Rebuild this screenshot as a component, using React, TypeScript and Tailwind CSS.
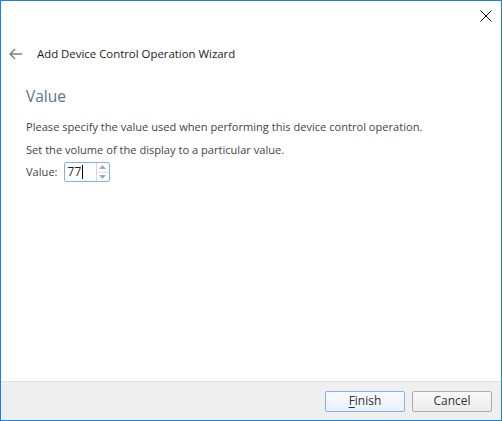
import React from "react";

const font = { fontFamily: '"Segoe UI", "Open Sans", "Noto Sans", sans-serif' };

const SpinBox = ({ value }: { value: string }) => (
  <div className="flex h-[20px] w-[46px] items-stretch rounded-[2px] border border-[#7eb4ea] bg-white">
    <div className="flex flex-1 items-center pl-[3px] text-[12px] text-[#1e1e1e]">
      {value}
      <span className="ml-[1px] h-[14px] w-px bg-black" />
    </div>
    <div className="flex w-[13px] flex-col border-l border-[#d5d5d5]">
      <div className="flex flex-1 items-center justify-center border-b border-[#e2e2e2]">
        <svg width="7" height="4" viewBox="0 0 7 4">
          <path d="M0 4 L3.5 0 L7 4 Z" fill="#a8a8a8" />
        </svg>
      </div>
      <div className="flex flex-1 items-center justify-center">
        <svg width="7" height="4" viewBox="0 0 7 4">
          <path d="M0 0 L3.5 4 L7 0 Z" fill="#a8a8a8" />
        </svg>
      </div>
    </div>
  </div>
);

export default function App() {
  return (
    <div
      className="flex h-[421px] w-[502px] flex-col border border-[#1883d7] bg-white text-[#333]"
      style={font}
    >
      {/* title bar */}
      <div className="flex h-[36px] justify-end pr-[9px] pt-[9px]">
        <svg width="12" height="12" viewBox="0 0 12 12">
          <path d="M0.5 0.5 L11.5 11.5 M11.5 0.5 L0.5 11.5" stroke="#111" strokeWidth="1" />
        </svg>
      </div>

      {/* wizard header */}
      <div className="flex h-[34px] items-center">
        <svg width="14" height="12" viewBox="0 0 14 12" className="ml-[8px]">
          <path d="M1 6 H13 M6 1 L1 6 L6 11" stroke="#808080" strokeWidth="1.5" fill="none" />
        </svg>
        <span className="ml-[14px] text-[11.4px] text-[#1a1a1a]">
          Add Device Control Operation Wizard
        </span>
      </div>

      {/* page */}
      <div className="flex flex-1 flex-col pl-[25px]">
        <h2 className="mt-[14px] text-[15.5px] leading-[22px] text-[#61738c]">Value</h2>
        <p className="mt-[12px] text-[11.1px] leading-[16px] text-[#444]">
          Please specify the value used when performing this device control operation.
        </p>
        <p className="mt-[7px] text-[11.1px] leading-[16px] text-[#444]">
          Set the volume of the display to a particular value.
        </p>
        <div className="mt-[4px] flex items-center gap-[6px]">
          <span className="text-[11.1px] text-[#444]">Value:</span>
          <SpinBox value="77" />
        </div>
      </div>

      {/* footer */}
      <div className="flex h-[39px] items-center justify-end gap-[7px] border-t border-[#dfdfdf] bg-[#efefef] pr-[9px]">
        <button className="h-[21px] w-[80px] rounded-[2px] border border-[#7eb4ea] bg-gradient-to-b from-[#f7fbff] to-[#e8f1fb] text-[12px] text-[#333]">
          <span className="underline underline-offset-2">F</span>inish
        </button>
        <button className="h-[21px] w-[80px] rounded-[2px] border border-[#adadad] bg-gradient-to-b from-[#f8f8f8] to-[#ececec] text-[12px] text-[#333]">
          Cancel
        </button>
      </div>
    </div>
  );
}
